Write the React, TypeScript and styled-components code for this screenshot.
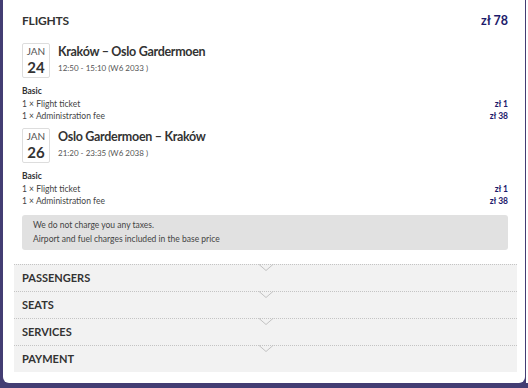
import React from "react";
import styled, { createGlobalStyle } from "styled-components";

const GlobalStyle = createGlobalStyle`
  html, body {
    margin: 0;
    padding: 0;
    background: #433d73;
  }
  body {
    font-family: Lato, "Open Sans", sans-serif;
    color: #333333;
  }
`;

const NAVY = "#1c1a6b";

type Flight = {
  month: string;
  day: string;
  route: string;
  time: string;
  lines: { label: string; price: string }[];
};

const flights: Flight[] = [
  {
    month: "JAN",
    day: "24",
    route: "Kraków – Oslo Gardermoen",
    time: "12:50 - 15:10 (W6 2033 )",
    lines: [
      { label: "1 × Flight ticket", price: "zł 1" },
      { label: "1 × Administration fee", price: "zł 38" },
    ],
  },
  {
    month: "JAN",
    day: "26",
    route: "Oslo Gardermoen – Kraków",
    time: "21:20 - 23:35 (W6 2038 )",
    lines: [
      { label: "1 × Flight ticket", price: "zł 1" },
      { label: "1 × Administration fee", price: "zł 38" },
    ],
  },
];

const sections = ["PASSENGERS", "SEATS", "SERVICES", "PAYMENT"];

export default function App() {
  return (
    <Page>
      <GlobalStyle />
      <Card>
        <Header>
          <SectionTitle>FLIGHTS</SectionTitle>
          <Total>zł 78</Total>
        </Header>

        {flights.map((f) => (
          <FlightBlock key={f.day}>
            <FlightRow>
              <DateBox>
                <Month>{f.month}</Month>
                <Day>{f.day}</Day>
              </DateBox>
              <Info>
                <Route>{f.route}</Route>
                <Time>{f.time}</Time>
              </Info>
            </FlightRow>
            <Fare>
              <FareName>Basic</FareName>
              {f.lines.map((l) => (
                <FareLine key={l.label}>
                  <span>{l.label}</span>
                  <Price>{l.price}</Price>
                </FareLine>
              ))}
            </Fare>
          </FlightBlock>
        ))}

        <TaxNote>
          <div>We do not charge you any taxes.</div>
          <div>Airport and fuel charges included in the base price</div>
        </TaxNote>

        <Accordion>
          {sections.map((s) => (
            <AccordionRow key={s}>
              <Notch width="16" height="7" viewBox="0 0 16 7">
                <polyline points="0.5,0 8,6.5 15.5,0" fill="none" stroke="#c2c2c2" strokeWidth="1" />
              </Notch>
              <RowLabel>{s}</RowLabel>
            </AccordionRow>
          ))}
        </Accordion>
      </Card>
      <Edge />
    </Page>
  );
}

const Page = styled.div`
  display: flex;
  align-items: flex-start;
  height: 388px;
  padding-left: 3px;
  box-sizing: border-box;
  overflow: hidden;
`;

const Card = styled.div`
  flex: 1;
  height: 383px;
  box-sizing: border-box;
  background: #ffffff;
  border-radius: 0 0 6px 6px;
  padding: 13px 17px 0 19px;
`;

const Edge = styled.div`
  width: 2px;
  height: 383px;
  margin-left: 1px;
  background: #ffffff;
`;

const Header = styled.div`
  display: flex;
  justify-content: space-between;
  align-items: center;
  height: 16px;
  margin-bottom: 14px;
`;

const SectionTitle = styled.div`
  font-size: 12px;
  font-weight: 700;
  line-height: 16px;
  letter-spacing: -0.2px;
  color: #333333;
`;

const Total = styled.div`
  font-size: 12.5px;
  font-weight: 700;
  line-height: 16px;
  color: ${NAVY};
`;

const FlightBlock = styled.div`
  & + & {
    margin-top: 5.5px;
  }
`;

const FlightRow = styled.div`
  display: flex;
  align-items: flex-start;
  gap: 8px;
`;

const DateBox = styled.div`
  width: 28px;
  height: 35px;
  box-sizing: border-box;
  border: 1px solid #dddddd;
  border-radius: 2px;
  padding-top: 1px;
  display: flex;
  flex-direction: column;
  align-items: center;
`;

const Month = styled.div`
  font-size: 10px;
  line-height: 12px;
  color: #555555;
`;

const Day = styled.div`
  font-size: 15px;
  font-weight: 700;
  line-height: 20px;
  color: #333333;
`;

const Info = styled.div`
  display: flex;
  flex-direction: column;
  padding-top: 1px;
`;

const Route = styled.div`
  font-size: 12.5px;
  font-weight: 700;
  line-height: 16px;
  letter-spacing: -0.3px;
  color: #333333;
`;

const Time = styled.div`
  font-size: 8px;
  line-height: 12px;
  margin-top: 2px;
  color: #555555;
`;

const Fare = styled.div`
  margin-top: 7px;
  font-size: 8.5px;
  line-height: 12.5px;
`;

const FareName = styled.div`
  font-weight: 700;
  color: #333333;
`;

const FareLine = styled.div`
  display: flex;
  justify-content: space-between;
  color: #444444;
`;

const Price = styled.span`
  font-weight: 700;
  color: ${NAVY};
`;

const TaxNote = styled.div`
  margin-top: 7.5px;
  background: #e1e1e1;
  border-radius: 3px;
  padding: 3px 11px 4px;
  font-size: 8.5px;
  line-height: 14px;
  color: #444444;
`;

const Accordion = styled.div`
  margin: 14px -9px 0 -8px;
`;

const AccordionRow = styled.div`
  position: relative;
  height: 27px;
  box-sizing: border-box;
  border-top: 1px dotted #c4c4c4;
  background: #f2f2f2;
  display: flex;
  align-items: center;
  padding-left: 8px;
`;

const Notch = styled.svg`
  position: absolute;
  top: -1px;
  left: 50%;
  margin-left: -8px;
`;

const RowLabel = styled.div`
  font-size: 11px;
  font-weight: 700;
  line-height: 14px;
  color: #333333;
`;
